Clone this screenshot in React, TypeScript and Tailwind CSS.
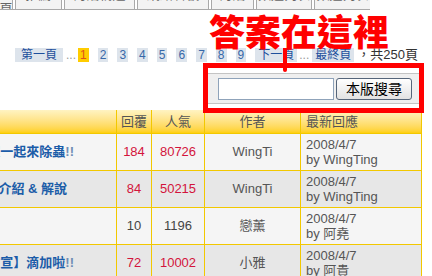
import React from "react";

const CJK = "font-['Liberation_Sans','Noto_Sans_CJK_TC',sans-serif]";

const TABS = [
  { label: "主頁", w: "w-[14px]", ml: "ml-[-1px]" },
  { label: "推薦", w: "w-[47px]", ml: "ml-[2px]" },
  { label: "討論精選", w: "w-[71px]", ml: "ml-[2px]" },
  { label: "網路看板", w: "w-[72px]", ml: "ml-[2px]" },
  { label: "討論", w: "w-[43px]", ml: "ml-[2px]" },
  { label: "頻道列表", w: "w-[56px]", ml: "ml-[2px]" },
  { label: "頻道列表", w: "w-[57px]", ml: "ml-[2px]" },
];

const PAGES = ["2", "3", "4", "5", "6", "7", "8", "9"];

const ROWS = [
  { title: "大家一起來除蟲", bang: true, pr: "pr-[42px]", reply: "184", hits: "80726", hot: true, author: "WingTi", by: "WingTing", bg: "bg-[#f5f5f5]" },
  { title: "遊戲介紹 & 解說", bang: false, pr: "pr-[49px]", reply: "84", hits: "50215", hot: true, author: "WingTi", by: "WingTing", bg: "bg-[#e7e7e7]" },
  { title: "", bang: false, pr: "pr-[42px]", reply: "10", hits: "1196", hot: false, author: "戀薰", by: "阿堯", bg: "bg-[#f5f5f5]" },
  { title: "【文宣】滴加啦", bang: true, pr: "pr-[42px]", reply: "72", hits: "10002", hot: true, author: "小雅", by: "阿貴", bg: "bg-[#e7e7e7]" },
];

export default function App() {
  return (
    <div className={`relative h-[276px] w-[432px] overflow-hidden bg-white ${CJK}`}>
      {/* Tabs, cut off at the top */}
      <div className="flex h-[10px] w-[370px] items-end overflow-hidden border-b border-[#a9a9a9]">
        {TABS.map((t, i) => (
          <div
            key={i}
            className={`${t.w} ${t.ml} flex h-[30px] shrink-0 justify-center overflow-hidden border-x border-[#a9a9a9] bg-[#f3f3f3] pt-[9px] text-[13px] leading-[14px] text-[#666]`}
          >
            {t.label}
          </div>
        ))}
      </div>

      {/* Pagination */}
      <div className="mt-[38px] flex h-[14px] items-center whitespace-nowrap pl-[15px] text-[12px] leading-[14px]">
        <span className="bg-[#dde4ec] px-[6px] text-[#1d4f9c]">第一頁</span>
        <span className="ml-[3px] text-[#9a9a9a]">...</span>
        <span className="ml-[2px] bg-[#ffcc00] px-[2px] text-[#e0501a]">1</span>
        {PAGES.map((p) => (
          <span key={p} className="ml-[9px] bg-[#dde4ec] px-[2px] text-[#3868a8]">
            {p}
          </span>
        ))}
        <span className="ml-[9px] bg-[#dde4ec] px-[3px] text-[#1d4f9c]">下一頁</span>
        <span className="ml-[2px] text-[#9a9a9a]">...</span>
        <span className="ml-[3px] bg-[#dde4ec] px-[3px] text-[#1d4f9c]">最終頁</span>
        <span className="ml-[3px] text-[13px] text-[#333]">，共250頁</span>
      </div>

      {/* Search panel */}
      <div className="ml-[206px] mt-[11px] flex h-[31px] w-[215px] items-center border-y border-[#c4c4c4] bg-[#efefef] pl-[12px]">
        <input
          aria-label="search"
          className="h-[22px] w-[116px] border border-[#8fa3ba] bg-white outline-none"
        />
        <button className="ml-[2px] h-[22px] w-[76px] rounded-[3px] border border-[#55657a] bg-gradient-to-b from-white to-[#e2e2e2] text-[14px] leading-[20px] text-black">
          本版搜尋
        </button>
      </div>

      {/* Topic table */}
      <div className="mt-[6px] w-[422px] text-[13px]">
        <div className="grid h-[24px] grid-cols-[117px_35px_53px_96px_121px] border-b border-[#f2c800] bg-gradient-to-b from-[#fff3c2] to-[#ffd000] text-[#555]">
          <div className="border-r border-[#f2c800]" />
          <div className="flex items-center justify-center border-r border-[#f2c800]">回覆</div>
          <div className="flex items-center justify-center border-r border-[#f2c800]">人氣</div>
          <div className="flex items-center justify-center border-r border-[#f2c800]">作者</div>
          <div className="flex items-center border-r border-[#f2c800] pl-[5px]">最新回應</div>
        </div>
        {ROWS.map((r, i) => (
          <div
            key={i}
            className={`grid h-[37px] grid-cols-[117px_35px_53px_96px_121px] border-b border-[#f2c800] ${r.bg}`}
          >
            <div className={`flex items-center justify-end overflow-hidden whitespace-nowrap border-r border-[#f2c800] ${r.pr}`}>
              <span className="font-bold text-[#1b5ca8]">{r.title}</span>
              {r.bang && <span className="font-bold text-[#6f8db4]">!!</span>}
            </div>
            <div className={`flex items-center justify-center border-r border-[#f2c800] ${r.hot ? "text-[#d3143c]" : "text-[#444]"}`}>
              {r.reply}
            </div>
            <div className={`flex items-center justify-center border-r border-[#f2c800] ${r.hot ? "text-[#d3143c]" : "text-[#444]"}`}>
              {r.hits}
            </div>
            <div className="flex items-center justify-center border-r border-[#f2c800] text-[#555]">{r.author}</div>
            <div className="flex flex-col justify-center border-r border-[#f2c800] pl-[5px] leading-[15px] text-[#555]">
              <span>2008/4/7</span>
              <span>by {r.by}</span>
            </div>
          </div>
        ))}
      </div>

      {/* Red annotation drawn over the page */}
      <div className="pointer-events-none absolute left-[209px] top-[11px] text-[36px] font-black leading-[46px] text-[#ff0000]">
        答案在這裡
      </div>
      <div className="pointer-events-none absolute left-[283px] top-[48px] h-[24px] w-[4px] rounded-b-full bg-[#ff0000]" />
      <div className="pointer-events-none absolute left-[203px] top-[63px] h-[50px] w-[221px] border-[5px] border-[#ff0000]" />
    </div>
  );
}
